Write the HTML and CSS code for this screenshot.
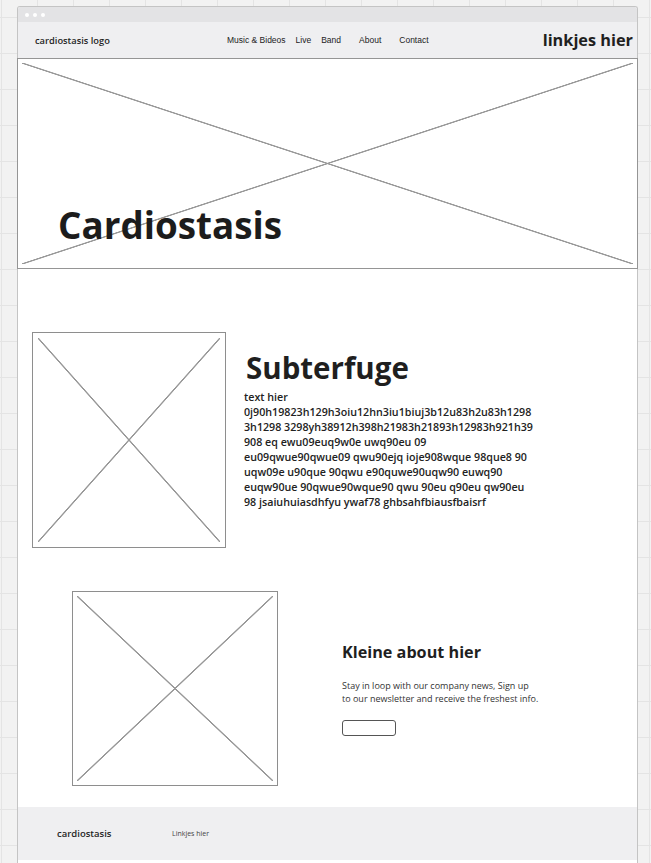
FILE: index.html
```html
<!DOCTYPE html>
<html lang="nl">
<head>
  <meta charset="UTF-8" />
  <meta name="viewport" content="width=device-width, initial-scale=1" />
  <title>Cardiostasis wireframe</title>
  <link rel="stylesheet" href="styles.css">
</head>
<body>

<div class="frame">
  <div class="titlebar">
    <span class="dot"></span>
    <span class="dot"></span>
    <span class="dot"></span>
  </div>

  <!-- Top navigation -->
  <header class="nav">
    <div class="logo">cardiostasis logo</div>
    <nav class="menu">
      <a href="#">Music &amp; Bideos</a>
      <a href="#">Live</a>
      <a href="#">Band</a>
      <a href="#" class="wide">About</a>
      <a href="#" class="wide">Contact</a>
    </nav>
    <div class="nav-links">linkjes hier</div>
  </header>

  <section class="hero placeholder">
    <h1>Cardiostasis</h1>
  </section>

  <section class="feature">
    <div class="feature-img placeholder"></div>
    <div class="feature-text">
      <h2>Subterfuge</h2>
      <p>text hier<br>
        0j90h19823h129h3oiu12hn3iu1biuj3b12u83h2u83h1298<br>
        3h1298 3298yh38912h398h21983h21893h12983h921h39<br>
        908 eq ewu09euq9w0e uwq90eu 09<br>
        eu09qwue90qwue09 qwu90ejq ioje908wque 98que8 90<br>
        uqw09e u90que 90qwu e90quwe90uqw90 euwq90<br>
        euqw90ue 90qwue90wque90 qwu 90eu q90eu qw90eu<br>
        98 jsaiuhuiasdhfyu ywaf78 ghbsahfbiausfbaisrf</p>
    </div>
  </section>

  <section class="about">
    <div class="about-img placeholder"></div>
    <div class="about-text">
      <h3>Kleine about hier</h3>
      <p>Stay in loop with our company news, Sign up<br>
        to our newsletter and receive the freshest info.</p>
      <button class="about-btn"></button>
    </div>
  </section>

  <footer class="footer">
    <div class="footer-logo">cardiostasis</div>
    <div class="footer-links">Linkjes hier</div>
  </footer>
</div>

</body>
</html>
```

FILE: styles.css
```css
body {
  margin: 0;
  font-family: 'Open Sans', 'Noto Sans', sans-serif;
  color: #1f1f1f;
  background-color: #f2f2f2;
  background-image:
    linear-gradient(to right, #e4e4e4 1px, transparent 1px),
    linear-gradient(to bottom, #e4e4e4 1px, transparent 1px);
  background-size: 36px 36px;
  background-position: 1px 17px;
  overflow: hidden;
}

.frame {
  margin: 6px 0 0 17px;
  width: 621px;
  box-sizing: border-box;
  border: 1px solid #c4c4c4;
  border-bottom: none;
  border-radius: 3px 3px 0 0;
  background: #fff;
  padding-bottom: 20px;
}

.titlebar {
  height: 15px;
  background: #e3e3e5;
  display: flex;
  align-items: center;
  gap: 4px;
  padding-left: 7px;
  border-radius: 2px 2px 0 0;
}

.dot {
  width: 4px;
  height: 4px;
  border-radius: 50%;
  background: #fff;
}

/* Nav */
.nav {
  height: 36px;
  background: #efeff1;
  display: flex;
  align-items: center;
  padding: 0 4px 0 17px;
}

.logo {
  flex: 0 0 192px;
  font-size: 9.3px;
  font-weight: 600;
}

.menu {
  display: flex;
  gap: 10px;
}

.menu a {
  font-family: 'Liberation Sans', Arial, sans-serif;
  font-size: 8.5px;
  color: #222;
  text-decoration: none;
}

.menu a.wide {
  margin-left: 8px;
}

.nav-links {
  margin-left: auto;
  font-size: 16.3px;
  font-weight: 700;
}

/* Image placeholders: box with a cross */
.placeholder {
  box-sizing: border-box;
  border: 1px solid #8e8e8e;
  padding: 5px;
  background-image:
    linear-gradient(to top right, transparent calc(50% - 1px), #999 calc(50% - 0.4px), #999 calc(50% + 0.4px), transparent calc(50% + 1px)),
    linear-gradient(to bottom right, transparent calc(50% - 1px), #999 calc(50% - 0.4px), #999 calc(50% + 0.4px), transparent calc(50% + 1px));
  background-origin: content-box;
  background-clip: content-box;
  background-repeat: no-repeat;
}

.hero {
  height: 211px;
  margin: 0 -1px;
  padding: 4px;
  border-color: #959595;
  display: flex;
  align-items: flex-end;
}

.hero h1 {
  margin: 0 0 21px 36px;
  font-size: 36.8px;
  line-height: 36px;
  font-weight: 700;
  color: #1c1c1c;
}

/* Feature block */
.feature {
  display: flex;
  margin-top: 63px;
  padding-left: 14px;
}

.feature-img {
  flex: 0 0 194px;
  height: 216px;
}

.feature-text {
  margin: 18px 0 0 18px;
}

.feature-text h2 {
  margin: 0;
  font-size: 29.5px;
  line-height: 36px;
  font-weight: 700;
  padding-left: 2px;
}

.feature-text p {
  margin: 4px 0 0;
  font-size: 10.7px;
  line-height: 15px;
  font-weight: 600;
  color: #222;
}

/* About block */
.about {
  display: flex;
  margin-top: 43px;
  padding-left: 54px;
}

.about-img {
  flex: 0 0 206px;
  height: 195px;
  padding: 4px;
}

.about-text {
  margin: 51px 0 0 64px;
}

.about-text h3 {
  margin: 0;
  font-size: 16.2px;
  line-height: 20px;
  font-weight: 700;
}

.about-text p {
  margin: 17px 0 0;
  font-size: 9px;
  line-height: 13px;
  color: #333;
}

.about-btn {
  display: block;
  margin-top: 15px;
  width: 54px;
  height: 16px;
  padding: 0;
  border: 1px solid #555;
  border-radius: 3px;
  background: #fff;
}

/* Footer */
.footer {
  margin-top: 21px;
  height: 53px;
  background: #efeff1;
  display: flex;
  align-items: center;
  padding-left: 39px;
}

.footer-logo {
  flex: 0 0 115px;
  font-size: 9.5px;
  font-weight: 600;
}

.footer-links {
  font-size: 7px;
  color: #444;
}
```
